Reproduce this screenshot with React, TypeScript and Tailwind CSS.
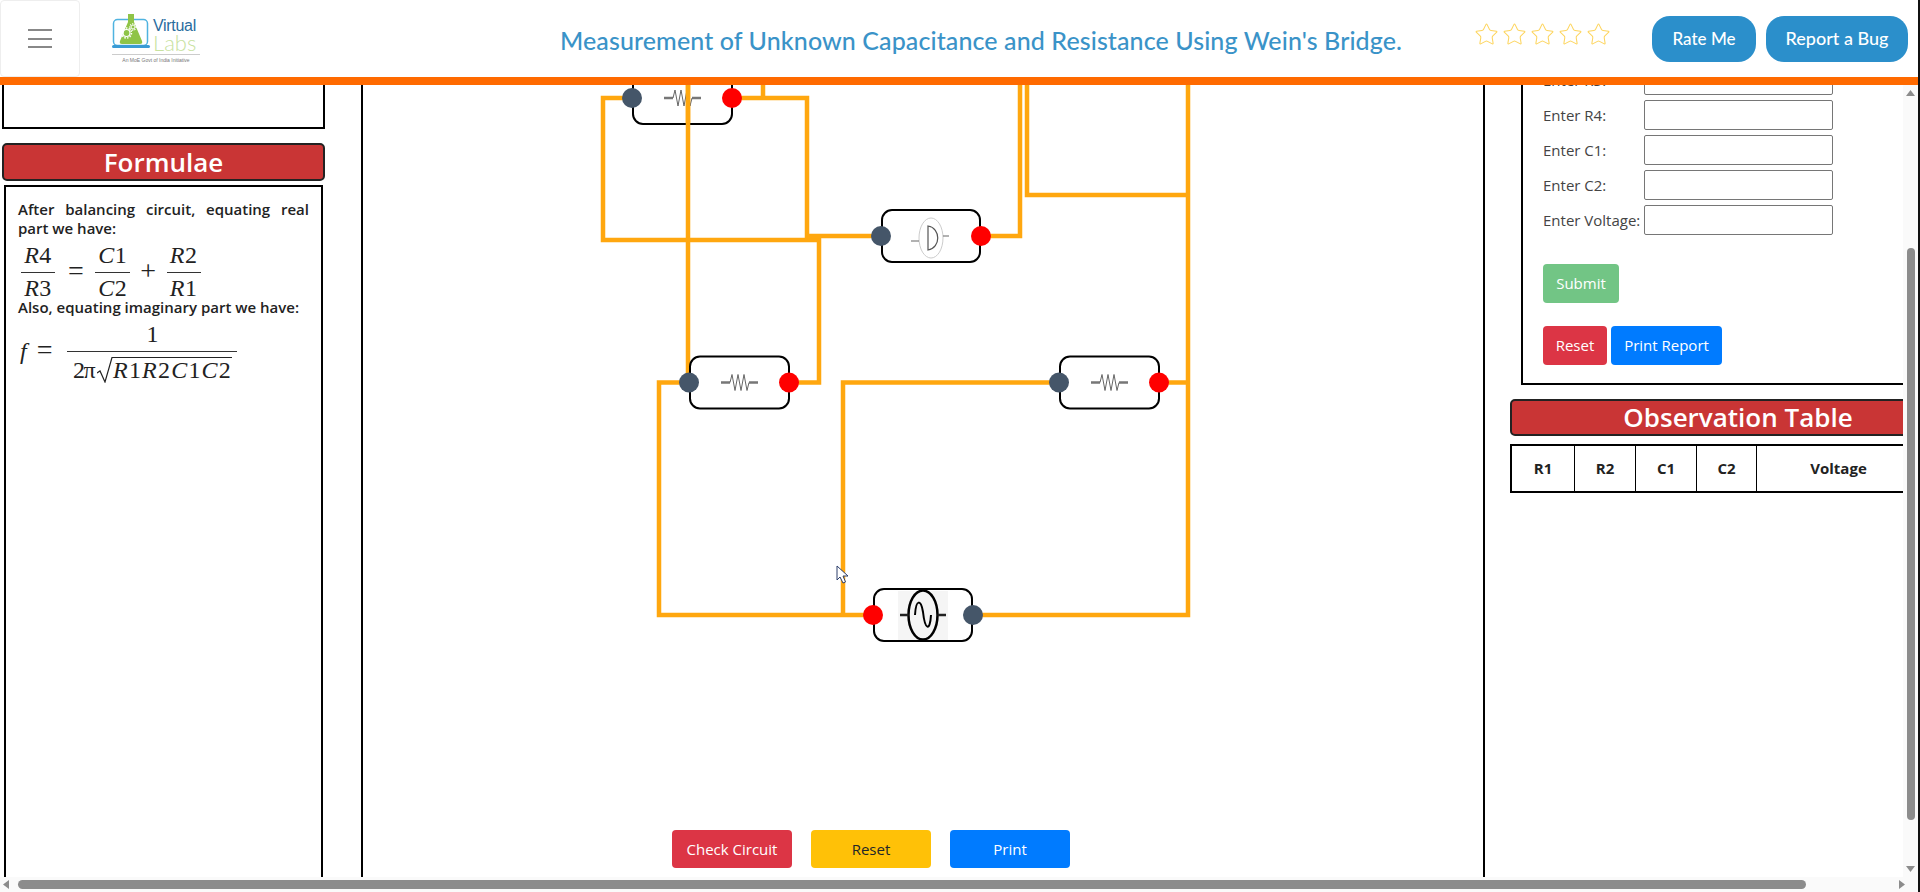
import type { ReactNode } from 'react';
import { Star } from 'lucide-react';

const WIRES = [
  'M632 98 H603 V240 H819',
  'M688 85 V382',
  'M732 98 H807 V240',
  'M763 85 V98',
  'M807 236 H881',
  'M819 238 V382.5 H789',
  'M689 382.5 H659 V615 H873',
  'M843 615 V382.5 H1059',
  'M1159 382.5 H1188',
  'M1188 85 V615 H973',
  'M981 236 H1020 V85',
  'M1027 85 V195 H1188',
];

function Resistor({ x, y }: { x: number; y: number }) {
  return (
    <g>
      <rect x={x} y={y - 26} width={99} height={52} rx={10} fill="none" stroke="#000" strokeWidth={2} />
      <path d={`M${x + 31} ${y} H${x + 40} M${x + 59} ${y} H${x + 68}`} stroke="#777" strokeWidth={2.5} fill="none" />
      <path
        d={`M${x + 40} ${y} l2 -8 l3 16 l3 -16 l3 16 l3 -16 l3 16 l2 -8`}
        stroke="#666"
        strokeWidth={1}
        fill="none"
      />
    </g>
  );
}

function Terminal({ x, y, red }: { x: number; y: number; red?: boolean }) {
  return <circle cx={x} cy={y} r={10} fill={red ? '#ff0000' : '#455669'} />;
}

function Circuit() {
  return (
    <svg className="absolute inset-0 h-[792px] w-[1120px]" viewBox="363 85 1120 792">
      {WIRES.map((d) => (
        <path key={d} d={d} fill="none" stroke="#ffa70f" strokeWidth={4.5} />
      ))}

      <Resistor x={633} y={98} />
      <path d="M688 85 V125" stroke="#ffa70f" strokeWidth={4.5} />
      <Resistor x={690} y={382.5} />
      <Resistor x={1060} y={382.5} />

      {/* detector */}
      <rect x={882} y={210} width={98} height={52} rx={10} fill="none" stroke="#000" strokeWidth={2} />
      <ellipse cx={931} cy={238} rx={12} ry={20} fill="none" stroke="#ccc" strokeWidth={1} />
      <path d="M928 226 C941 228 941 248 928 250 Z" fill="none" stroke="#555" strokeWidth={1.2} />
      <path d="M911 241 H919 M943 236 H949" stroke="#666" strokeWidth={1.2} />

      {/* ac source */}
      <rect x={898} y={591} width={50} height={49} fill="#f5f5f5" />
      <rect x={874} y={589} width={98} height={52} rx={10} fill="none" stroke="#000" strokeWidth={2} />
      <ellipse cx={923} cy={615} rx={14.5} ry={24.5} fill="none" stroke="#000" strokeWidth={2.5} />
      <path d="M900 615 H908.5 M937.5 615 H946" stroke="#222" strokeWidth={2.5} />
      <path d="M915 615 C916 598 921 600 923 612 C925 630 930 632 931 615" fill="none" stroke="#000" strokeWidth={2} />

      <Terminal x={632} y={98} />
      <Terminal x={732} y={98} red />
      <Terminal x={881} y={236} />
      <Terminal x={981} y={236} red />
      <Terminal x={689} y={382.5} />
      <Terminal x={789} y={382.5} red />
      <Terminal x={1059} y={382.5} />
      <Terminal x={1159} y={382.5} red />
      <Terminal x={873} y={615} red />
      <Terminal x={973} y={615} />
    </svg>
  );
}

function Logo() {
  return (
    <div className="ml-[32px] flex w-[88px] flex-col">
      <div className="flex items-start">
        <svg width="40" height="36" viewBox="112 13 40 36" className="shrink-0">
          <rect x="113.5" y="19.5" width="34" height="26" rx="4" fill="none" stroke="#4fb3e0" strokeWidth="1.5" />
          <rect x="112" y="45" width="38" height="3" rx="1.5" fill="#3a9bd5" />
          <path d="M128 14 h6 v8 l8 19 q1 3 -2 3 h-18 q-3 0 -2 -3 l8 -19 z" fill="#8fc447" />
          <circle cx="126.5" cy="33" r="3.5" fill="none" stroke="#fff" strokeWidth="1.2" />
          <circle cx="126.5" cy="33" r="5" fill="none" stroke="#fff" strokeWidth="1.5" strokeDasharray="1.5 1.3" />
          <circle cx="133" cy="27" r="2" fill="none" stroke="#fff" strokeWidth="1" />
          <circle cx="133" cy="27" r="3.2" fill="none" stroke="#fff" strokeWidth="1.2" strokeDasharray="1.2 1.1" />
        </svg>
        <div className="ml-[1px] mt-[5px] flex flex-col font-['Liberation_Sans',sans-serif]">
          <span className="text-[16px] leading-[16px] tracking-[-0.3px] text-[#2a6c9e]">Virtual</span>
          <span className="font-['Lato',sans-serif] text-[22px] font-light leading-[17px] text-[#c8e2a0]">Labs</span>
        </div>
      </div>
      <div className="mt-[3px] h-px bg-[#ccc]" />
      <div className="mt-[1px] whitespace-nowrap text-center font-['Liberation_Sans',sans-serif] text-[5px] leading-[8px] text-[#777]">
        An MoE Govt of India Initiative
      </div>
    </div>
  );
}

function Header() {
  return (
    <header className="flex h-[77px] items-center bg-white">
      <button className="flex h-[77px] w-[80px] shrink-0 flex-col items-center justify-center gap-[6.5px] rounded border border-[#eee]">
        <span className="h-[2px] w-[24px] bg-[#888]" />
        <span className="h-[2px] w-[24px] bg-[#888]" />
        <span className="h-[2px] w-[24px] bg-[#888]" />
      </button>
      <Logo />
      <h1 className="ml-[360px] mt-[5px] w-[843px] whitespace-nowrap font-['Lato',sans-serif] text-[25px] font-medium tracking-[0.1px] text-[#3a93c8]">
        Measurement of Unknown Capacitance and Resistance Using Wein's Bridge.
      </h1>
      <div className="mb-[9px] ml-[71px] flex gap-[3px]">
        {[0, 1, 2, 3, 4].map((i) => (
          <Star key={i} size={25} strokeWidth={1} className="text-[#fdd55f]" />
        ))}
      </div>
      <div className="ml-[41px] flex gap-[10px] font-['Lato',sans-serif] font-medium text-white">
        <button className="h-[46px] w-[104px] rounded-[18px] bg-[#2b8fcb] text-[17px]">Rate Me</button>
        <button className="h-[46px] w-[142px] rounded-[18px] bg-[#2b8fcb] text-[18px]">Report a Bug</button>
      </div>
    </header>
  );
}

function Heading({ className, children }: { className: string; children: ReactNode }) {
  return (
    <div
      className={`flex h-[38px] shrink-0 items-center justify-center rounded-[5px] border-2 border-[#222] bg-[#c93535] font-semibold text-white ${className}`}
    >
      {children}
    </div>
  );
}

function Frac({ num, den, bar = 'w-[34px]' }: { num: ReactNode; den: ReactNode; bar?: string }) {
  return (
    <span className={`inline-flex flex-col items-center ${bar}`}>
      <span className="leading-[34px]">{num}</span>
      <span className="h-px w-full shrink-0 bg-[#333]" />
      <span className="leading-[30px]">{den}</span>
    </span>
  );
}

function Formulae() {
  return (
    <div className="ml-[4px] mt-[4px] flex min-h-0 w-[319px] flex-1 flex-col border-x-2 border-t-2 border-black px-[12px] pt-[13px] text-[15px] font-semibold leading-[19px] text-[#222]">
      <p className="[text-align-last:justify]">After balancing circuit, equating real</p>
      <p>part we have:</p>
      <div className="ml-[3px] flex h-[60px] items-start font-['Liberation_Serif',serif] text-[24px] font-normal tracking-[0.5px] text-[#222]">
        <Frac num={<><i>R</i>4</>} den={<><i>R</i>3</>} />
        <span className="ml-[13px] mt-[20px] text-[28px] leading-[26px]">=</span>
        <span className="ml-[11px]">
          <Frac bar="w-[35px]" num={<><i>C</i>1</>} den={<><i>C</i>2</>} />
        </span>
        <span className="ml-[10px] mt-[20px] text-[28px] leading-[26px]">+</span>
        <span className="ml-[10px]">
          <Frac num={<><i>R</i>2</>} den={<><i>R</i>1</>} />
        </span>
      </div>
      <p className="whitespace-nowrap">Also, equating imaginary part we have:</p>
      <div className="ml-[2px] flex items-start font-['Liberation_Serif',serif] text-[24px] font-normal text-[#222]">
        <span className="mt-[21px] leading-[26px]"><i>f</i></span>
        <span className="ml-[10px] mt-[20px] text-[28px] leading-[26px]">=</span>
        <span className="ml-[15px]">
          <Frac
            bar="w-[170px]"
            num={<span className="block h-[34px]">1</span>}
            den={
              <span className="mt-[5px] flex items-start whitespace-nowrap">
                <span className="leading-[26px] tracking-[-1.5px]">2π</span>
                <svg width="16" height="26" viewBox="0 0 16 26" className="ml-[3px] shrink-0">
                  <path d="M0 16 L3 14 L8 25 L15 0.5 H16" fill="none" stroke="#222" strokeWidth="1.2" />
                </svg>
                <span className="border-t border-[#222] leading-[24px] tracking-[1.2px]">
                  <i>R</i>1<i>R</i>2<i>C</i>1<i>C</i>2
                </span>
              </span>
            }
          />
        </span>
      </div>
    </div>
  );
}

function LeftColumn() {
  return (
    <aside className="flex w-[361px] shrink-0 flex-col">
      <div className="ml-[2px] h-[44px] w-[323px] shrink-0 border-x-2 border-b-2 border-black" />
      <Heading className="ml-[2px] mt-[14px] w-[323px] text-[26px]">Formulae</Heading>
      <Formulae />
    </aside>
  );
}

function CircuitCanvas() {
  return (
    <main className="relative flex w-[1124px] shrink-0 items-end gap-[19px] overflow-hidden border-x-2 border-black pb-[9px] pl-[309px] text-[15px] font-normal">
      <Circuit />
      <button className="relative h-[38px] w-[120px] rounded bg-[#dc3545] text-white">Check Circuit</button>
      <button className="relative h-[38px] w-[120px] rounded bg-[#ffc107] text-[#212529]">Reset</button>
      <button className="relative h-[38px] w-[120px] rounded bg-[#007bff] text-white">Print</button>
    </main>
  );
}

const INPUTS = ['Enter R3:', 'Enter R4:', 'Enter C1:', 'Enter C2:', 'Enter Voltage:'];
const COLUMNS = ['R1', 'R2', 'C1', 'C2', 'Voltage'];

function RightColumn() {
  return (
    <aside className="min-w-0 flex-1 overflow-hidden text-[15px]">
      <div className="ml-[36px] flow-root h-[300px] w-[500px] border-b-2 border-l-2 border-black pl-[20px]">
        <div className="-mt-[20px] flex flex-col gap-[5px] text-[#444]">
          {INPUTS.map((label) => (
            <div key={label} className="flex h-[30px] items-center">
              <label className="w-[101px] whitespace-nowrap">{label}</label>
              <input className="h-[30px] w-[189px] rounded-[2px] border border-[#767676] bg-white" />
            </div>
          ))}
        </div>
        <button className="mt-[29px] block h-[39px] w-[76px] rounded bg-[#28a745] text-white opacity-65">Submit</button>
        <div className="mt-[23px] flex gap-[4px] text-white">
          <button className="h-[39px] w-[64px] rounded bg-[#dc3545]">Reset</button>
          <button className="h-[39px] w-[111px] rounded bg-[#007bff]">Print Report</button>
        </div>
      </div>
      <Heading className="ml-[25px] mt-[14px] h-[37px]! w-[456px] text-[26px]">Observation Table</Heading>
      <div className="ml-[25px] mt-[8px] grid h-[49px] w-[410px] grid-cols-[62px_61px_61px_60px_164px] border-2 border-black font-bold text-[#222]">
        {COLUMNS.map((name, i) => (
          <div key={name} className={`flex items-center justify-center ${i > 0 ? 'border-l border-black' : ''}`}>
            {name}
          </div>
        ))}
      </div>
    </aside>
  );
}

function VerticalScrollbar() {
  return (
    <div className="flex w-[15px] shrink-0 flex-col items-center bg-[#fafafa]">
      <svg width="9" height="6" viewBox="0 0 9 6" className="mt-[5px] shrink-0">
        <path d="M4.5 0 L9 6 H0 Z" fill="#8c8c8c" />
      </svg>
      <div className="mt-[152px] h-[572px] w-[8px] rounded-full bg-[#8c8c8c]" />
      <div className="flex-1" />
      <svg width="9" height="6" viewBox="0 0 9 6" className="mb-[5px] shrink-0">
        <path d="M0 0 H9 L4.5 6 Z" fill="#8c8c8c" />
      </svg>
    </div>
  );
}

function HorizontalScrollbar() {
  return (
    <div className="flex h-[15px] shrink-0 items-center bg-[#fafafa] pl-[3px] pr-[13px]">
      <svg width="6" height="9" viewBox="0 0 6 9" className="shrink-0">
        <path d="M6 0 V9 L0 4.5 Z" fill="#8c8c8c" />
      </svg>
      <div className="ml-[9px] h-[9px] w-[1788px] rounded-full bg-[#8c8c8c]" />
      <div className="flex-1" />
      <svg width="6" height="9" viewBox="0 0 6 9" className="shrink-0">
        <path d="M0 0 L6 4.5 L0 9 Z" fill="#8c8c8c" />
      </svg>
    </div>
  );
}

export default function App() {
  return (
    <div className="relative flex h-[892px] w-[1920px] overflow-hidden bg-white font-['Open_Sans',sans-serif]">
      <div className="flex w-[1918px] flex-col">
        <Header />
        <div className="h-[8px] shrink-0 bg-[#ff6a00]" />
        <div className="flex min-h-0 flex-1">
          <div className="flex w-[1903px] min-w-0">
            <LeftColumn />
            <CircuitCanvas />
            <RightColumn />
          </div>
          <VerticalScrollbar />
        </div>
        <HorizontalScrollbar />
      </div>
      <div className="w-[2px] bg-[#111]" />

      {/* mouse pointer */}
      <svg className="absolute left-[836px] top-[565px]" width="13" height="19" viewBox="0 0 13 19">
        <path d="M1 1 V15 L4 12 L7 18 L9.5 17 L7 11 H12 Z" fill="#fff" stroke="#2c3e6b" strokeWidth="1" />
      </svg>
    </div>
  );
}
